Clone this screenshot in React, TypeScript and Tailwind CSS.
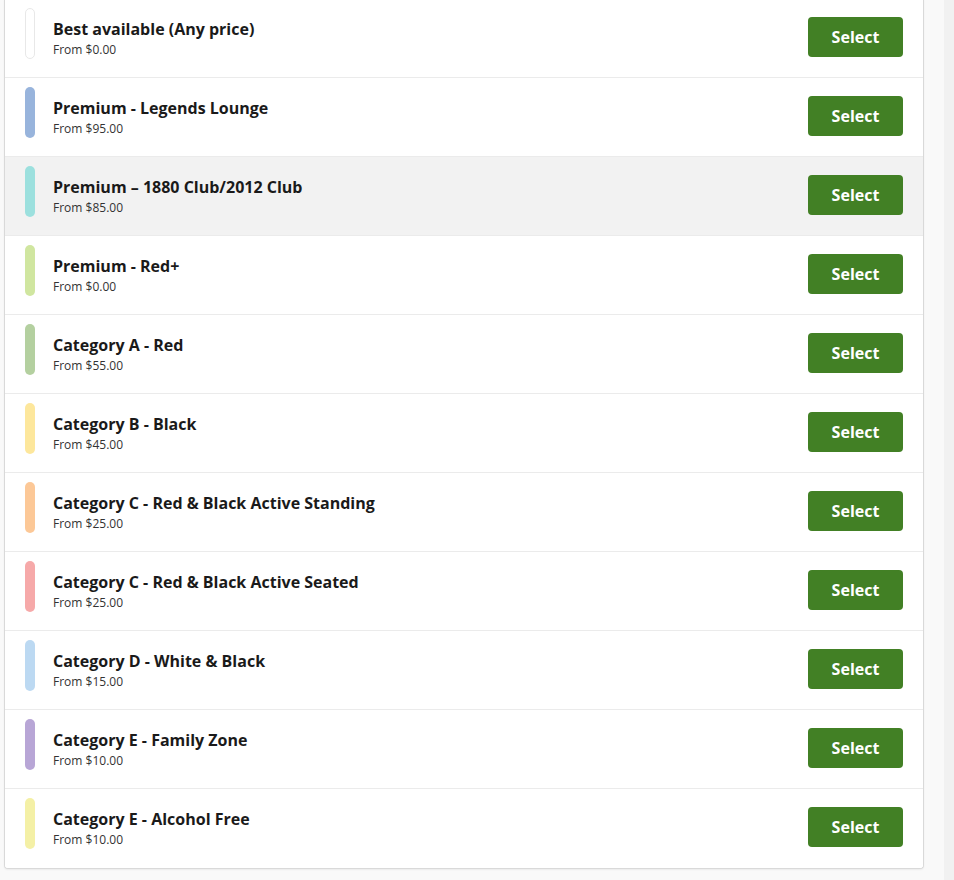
import React from "react";

type Section = {
	name: string;
	price: string;
	color: string;
};

const sections: Section[] = [
	{ name: "Best available (Any price)", price: "$0.00", color: "bg-white border border-[#e8e8e8]" },
	{ name: "Premium - Legends Lounge", price: "$95.00", color: "bg-[#98b4dc]" },
	{ name: "Premium \u2013 1880 Club/2012 Club", price: "$85.00", color: "bg-[#9ce0de]" },
	{ name: "Premium - Red+", price: "$0.00", color: "bg-[#d0e6a0]" },
	{ name: "Category A - Red", price: "$55.00", color: "bg-[#b4d0a0]" },
	{ name: "Category B - Black", price: "$45.00", color: "bg-[#fde79c]" },
	{ name: "Category C - Red & Black Active Standing", price: "$25.00", color: "bg-[#fcc897]" },
	{ name: "Category C - Red & Black Active Seated", price: "$25.00", color: "bg-[#f6a9a9]" },
	{ name: "Category D - White & Black", price: "$15.00", color: "bg-[#bcd9f2]" },
	{ name: "Category E - Family Zone", price: "$10.00", color: "bg-[#b8a6d6]" },
	{ name: "Category E - Alcohol Free", price: "$10.00", color: "bg-[#f4f0a6]" },
];

const Row = ({ section, active }: { section: Section; active?: boolean }) => {
	return (
		<div
			className={`flex h-[79px] items-start border-b border-[#ebebeb] pl-5 pr-5 last:border-b-0 ${
				active ? "bg-[#f2f2f2]" : "bg-white"
			}`}
		>
			<div className={`mt-[9px] h-[51px] w-[10px] shrink-0 rounded-[5px] ${section.color}`} />
			<div className="ml-[18px] mt-[20px] flex-1">
				<h2 className="text-[16px] font-bold leading-[20px] text-[#1a1a1a]">{section.name}</h2>
				<p className="mt-[3px] text-[12px] leading-[16px] text-[#333]">From {section.price}</p>
			</div>
			<button className="mt-[18px] h-[40px] w-[95px] rounded-[4px] bg-[#428025] text-[16px] font-bold text-white">
				Select
			</button>
		</div>
	);
};

export default function App() {
	return (
		<div
			className="flex h-[880px] w-full overflow-hidden bg-[#f9f9f9]"
			style={{ fontFamily: '"Open Sans", "Noto Sans", sans-serif' }}
		>
			<div className="ml-1 mt-[-1px] w-[920px] self-start">
				<div className="overflow-hidden rounded-b-[4px] border border-t-0 border-[#d9d9d9] bg-white shadow-[0_1px_2px_rgba(0,0,0,0.06)]">
					{sections.map((s, i) => (
						<Row key={s.name} section={s} active={i === 2} />
					))}
				</div>
			</div>
			<div className="ml-auto w-[10px] bg-[#f1f1f1]" />
		</div>
	);
}
